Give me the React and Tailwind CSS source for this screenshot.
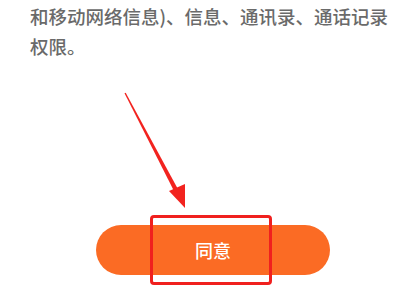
export default function App() {
  return (
    <div
      className="relative w-[415px] h-[289px] overflow-hidden bg-white"
      style={{ fontFamily: '"Noto Sans CJK SC", "Noto Sans", sans-serif' }}
    >
      <div className="pl-[30px] pt-[1px] text-[18.5px] leading-[30px] font-medium text-[#6a6a6a]">
        <p>和移动网络信息)、信息、通讯录、通话记录</p>
        <p>权限。</p>
      </div>

      <div className="mt-[164px] ml-[96px] w-[234px] h-[50px] rounded-full bg-[#fb6b24] flex items-center justify-center text-white text-[18px] font-medium">
        同意
      </div>

      {/* highlight box */}
      <div className="absolute left-[150px] top-[215px] w-[122px] h-[70px] border-[3px] border-[#f0201e] rounded-[4px]" />

      {/* arrow */}
      <svg
        className="absolute left-0 top-0"
        width="415"
        height="289"
        viewBox="0 0 415 289"
      >
        <polygon points="124.5,93.3 125.7,92.7 179.5,192 175.5,194" fill="#f2231f" />
        <polygon points="185,208 169,191 185,184" fill="#f2231f" />
      </svg>
    </div>
  );
}
